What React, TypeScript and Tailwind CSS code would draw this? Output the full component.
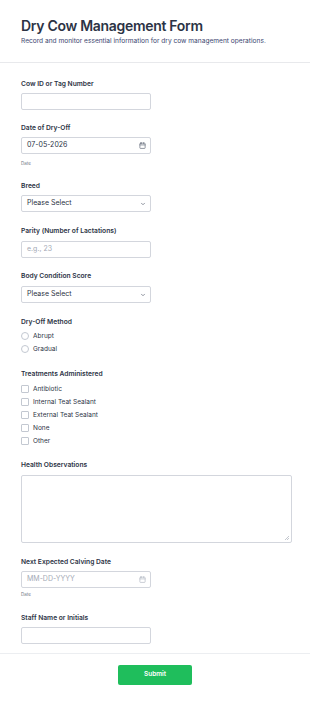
import React from "react";

const labelCls = "block text-[6.7px] leading-[10px] font-semibold text-[#2c3345]";

function Label({ children }: { children: React.ReactNode }) {
  return <div className={labelCls}>{children}</div>;
}

function Chevron() {
  return (
    <svg width="6" height="6" viewBox="0 0 24 24" fill="none" stroke="#6b7280" strokeWidth="3" strokeLinecap="round" strokeLinejoin="round">
      <path d="M6 9l6 6 6-6" />
    </svg>
  );
}

function Calendar({ color = "#6b7280" }: { color?: string }) {
  return (
    <svg width="7" height="7" viewBox="0 0 24 24" fill="none" stroke={color} strokeWidth="2.5" strokeLinecap="round" strokeLinejoin="round">
      <rect x="3" y="4" width="18" height="18" rx="2" />
      <path d="M16 2v4M8 2v4M3 10h18" />
    </svg>
  );
}

export default function App() {
  const box = "w-[130px] h-[17px] border border-[#d3d6dd] rounded-[2px] bg-white flex items-center pl-[5px] pr-[4px] text-[7px]";
  return (
    <div className="w-[310px] min-h-[702px] bg-white" style={{ fontFamily: "Inter, 'Noto Sans', sans-serif" }}>
      <div className="px-[21px] pt-[17px] pb-[16px] border-b border-[#e8e9ec]">
        <div className="text-[14px] leading-[18px] font-semibold text-[#2c3345] tracking-[-0.3px]">Dry Cow Management Form</div>
        <div className="mt-[1px] text-[6.6px] leading-[10px] text-[#3b4670]">Record and monitor essential information for dry cow management operations.</div>
      </div>

      <div className="px-[21px] pt-[16px]">
        {/* Cow ID */}
        <Label>Cow ID or Tag Number</Label>
        <div className={`mt-[4px] ${box}`}></div>

        {/* Date of Dry-Off */}
        <div className="mt-[13px]">
          <Label>Date of Dry-Off</Label>
          <div className={`mt-[4px] ${box} justify-between`}>
            <span className="text-[#2c3345]">07-05-2026</span>
            <Calendar />
          </div>
          <div className="mt-[7px] text-[4.5px] leading-[6px] text-[#6b7280]">Date</div>
        </div>

        {/* Breed */}
        <div className="mt-[14px]">
          <Label>Breed</Label>
          <div className={`mt-[4px] ${box} justify-between`}>
            <span className="text-[#2c3345]">Please Select</span>
            <Chevron />
          </div>
        </div>

        {/* Parity */}
        <div className="mt-[14px]">
          <Label>Parity (Number of Lactations)</Label>
          <div className={`mt-[5px] ${box}`}>
            <span className="text-[#a3a9b5]">e.g., 23</span>
          </div>
        </div>

        {/* BCS */}
        <div className="mt-[13px]">
          <Label>Body Condition Score</Label>
          <div className={`mt-[5px] ${box} justify-between`}>
            <span className="text-[#2c3345]">Please Select</span>
            <Chevron />
          </div>
        </div>

        {/* Dry-off method */}
        <div className="mt-[14px]">
          <Label>Dry-Off Method</Label>
          <div className="mt-[5px] flex flex-col gap-[5px]">
            {["Abrupt", "Gradual"].map((o) => (
              <div key={o} className="flex items-center gap-[4px] h-[8px]">
                <span className="w-[8px] h-[8px] rounded-full border border-[#c3c8d1] bg-white"></span>
                <span className="text-[6.5px] leading-[8px] text-[#2c3345]">{o}</span>
              </div>
            ))}
          </div>
        </div>

        {/* Treatments */}
        <div className="mt-[16px]">
          <Label>Treatments Administered</Label>
          <div className="mt-[6px] flex flex-col gap-[5px]">
            {["Antibiotic", "Internal Teat Sealant", "External Teat Sealant", "None", "Other"].map((o) => (
              <div key={o} className="flex items-center gap-[4px] h-[8px]">
                <span className="w-[8px] h-[8px] rounded-[1px] border border-[#c3c8d1] bg-white"></span>
                <span className="text-[6.5px] leading-[8px] text-[#2c3345]">{o}</span>
              </div>
            ))}
          </div>
        </div>

        {/* Health Observations */}
        <div className="mt-[15px]">
          <Label>Health Observations</Label>
          <div className="mt-[5px] w-[271px] h-[68px] border border-[#d3d6dd] rounded-[2px] relative">
            <svg className="absolute right-[2px] bottom-[2px]" width="4" height="4" viewBox="0 0 4 4">
              <path d="M4 0L0 4M4 2L2 4" stroke="#9ca3af" strokeWidth="0.6" />
            </svg>
          </div>
        </div>

        {/* Next Expected Calving Date */}
        <div className="mt-[14px]">
          <Label>Next Expected Calving Date</Label>
          <div className={`mt-[4px] ${box} justify-between`}>
            <span className="text-[#a3a9b5]">MM-DD-YYYY</span>
            <Calendar color="#b8bdc7" />
          </div>
          <div className="mt-[4px] text-[4.5px] leading-[6px] text-[#6b7280]">Date</div>
        </div>

        {/* Staff */}
        <div className="mt-[15px]">
          <Label>Staff Name or Initials</Label>
          <div className={`mt-[4px] ${box}`}></div>
        </div>
      </div>

      <div className="mt-[9px] border-t border-[#eceef1] flex justify-center pt-[11px]">
        <button className="w-[74px] h-[20px] rounded-[2px] bg-[#1fbe5c] text-white text-[6.5px] font-semibold">Submit</button>
      </div>
    </div>
  );
}
